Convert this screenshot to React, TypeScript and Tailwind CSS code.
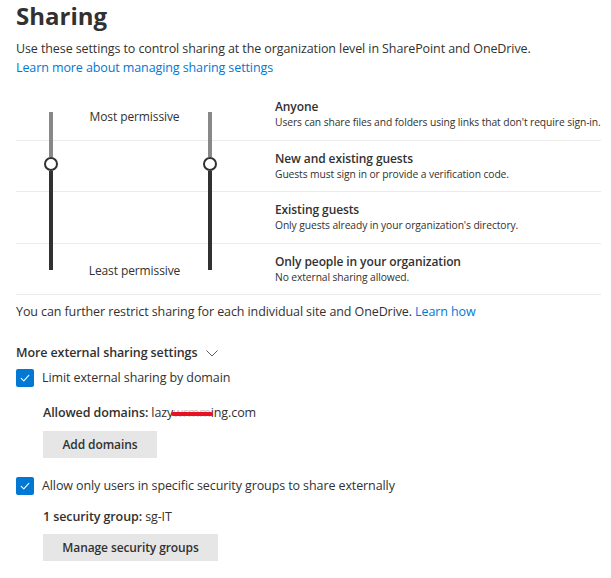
import React from "react";

const levels = [
  { title: "Anyone", desc: "Users can share files and folders using links that don't require sign-in." },
  { title: "New and existing guests", desc: "Guests must sign in or provide a verification code." },
  { title: "Existing guests", desc: "Only guests already in your organization's directory." },
  { title: "Only people in your organization", desc: "No external sharing allowed." },
];

function Slider() {
  return (
    <div className="flex w-[14px] flex-col items-center">
      <div className="h-[45px] w-[4px] bg-[#8a8886]" />
      <div className="h-[14px] w-[14px] shrink-0 rounded-full border-2 border-[#323130] bg-white" />
      <div className="w-[4px] flex-1 bg-[#323130]" />
    </div>
  );
}

function Checkbox() {
  return (
    <span className="flex h-[18px] w-[18px] shrink-0 items-center justify-center rounded-[2px] bg-[#0078d4]">
      <svg width="12" height="12" viewBox="0 0 12 12" fill="none">
        <path d="M2.2 6.3l2.6 2.5 5-5.4" stroke="white" strokeWidth="1.1" strokeLinecap="round" strokeLinejoin="round" />
      </svg>
    </span>
  );
}

export default function App() {
  return (
    <div
      className="min-h-[578px] w-[611px] bg-white px-4 tracking-[-0.1px] text-[#323130]"
      style={{ fontFamily: '"Open Sans", "Noto Sans", sans-serif' }}
    >
      <h1 className="text-[24px] font-bold leading-8 tracking-normal">Sharing</h1>
      <p className="mt-[7px] text-[12.5px] leading-[19px]">
        Use these settings to control sharing at the organization level in SharePoint and OneDrive.
        <br />
        <a className="text-[#0078d4]">Learn more about managing sharing settings</a>
      </p>

      <div className="mt-[12px] grid w-[584px] grid-cols-[259px_1fr] grid-rows-[repeat(4,51.5px)]">
        {levels.map((l, i) => (
          <div
            key={l.title}
            className="col-span-2 col-start-1 border-b border-[#edebe9]"
            style={{ gridRowStart: i + 1 }}
          />
        ))}
        {levels.map((l, i) => (
          <div key={l.title + "t"} className="col-start-2 pt-[10px]" style={{ gridRowStart: i + 1 }}>
            <div className="text-[12px] font-semibold leading-4">{l.title}</div>
            <div className="whitespace-nowrap text-[10.3px] leading-[14px]">{l.desc}</div>
          </div>
        ))}
        <div className="col-start-1 row-span-4 row-start-1 flex pb-[25px] pl-[28px] pt-[23px]">
          <Slider />
          <div className="-mb-[9px] -mt-[4px] flex w-[145px] flex-col justify-between pl-2 text-center text-[12px] leading-[17px]">
            <span>Most permissive</span>
            <span>Least permissive</span>
          </div>
          <Slider />
        </div>
      </div>

      <p className="mt-[7px] text-[12.5px] leading-[19px]">
        You can further restrict sharing for each individual site and OneDrive.{" "}
        <a className="text-[#0078d4]">Learn how</a>
      </p>

      <div className="mt-[22px] flex items-center gap-[8px] text-[12.5px] font-semibold leading-[19px]">
        More external sharing settings
        <svg width="14" height="14" viewBox="0 0 14 14" fill="none">
          <path d="M1.5 4.5l5.5 5.5 5.5-5.5" stroke="#605e5c" strokeWidth="1" />
        </svg>
      </div>

      <label className="mt-[6px] flex items-center gap-2 text-[12.5px] leading-[19px]">
        <Checkbox />
        Limit external sharing by domain
      </label>

      <div className="ml-[27px] mt-[16px] text-[12.5px] leading-[19px]">
        <span className="font-semibold">Allowed domains:</span> lazy
        <span className="relative text-[#c8c6c4]">
          wrmm
          <span className="absolute left-[-2px] right-[-2px] top-[8px] h-[4px] rounded-full bg-[#e81123]" />
        </span>
        ing.com
      </div>
      <button className="ml-[27px] mt-[9px] h-[27px] w-[114px] bg-[#e6e6e6] text-[12px] font-semibold">
        Add domains
      </button>

      <label className="mt-[18px] flex items-center gap-2 text-[12.5px] leading-[19px]">
        <Checkbox />
        Allow only users in specific security groups to share externally
      </label>

      <div className="ml-[27px] mt-[12px] text-[12.5px] leading-[19px]">
        <span className="font-semibold">1 security group:</span> sg-IT
      </div>
      <button className="ml-[27px] mt-[8px] h-[27px] w-[175px] bg-[#e6e6e6] text-[12px] font-semibold">
        Manage security groups
      </button>
    </div>
  );
}
